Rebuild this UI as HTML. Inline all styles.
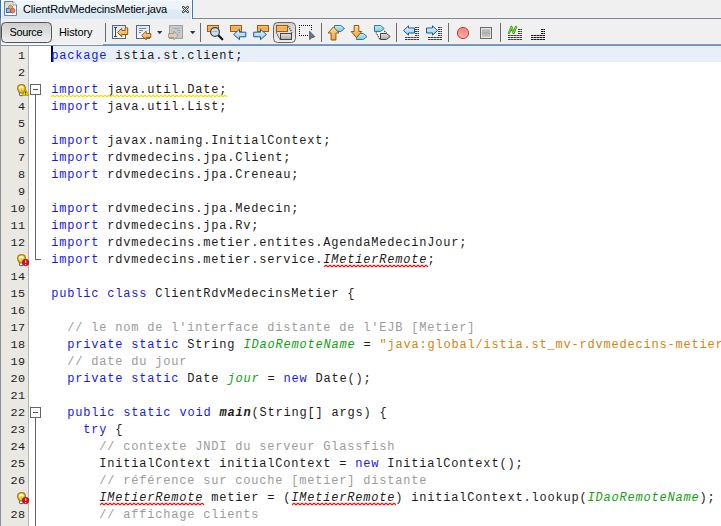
<!DOCTYPE html>
<html>
<head>
<meta charset="utf-8">
<title>ClientRdvMedecinsMetier.java</title>
<style>
html,body{margin:0;padding:0;}
body{width:721px;height:526px;overflow:hidden;position:relative;background:#fff;font-family:"Liberation Sans",sans-serif;}
.abs{position:absolute;}
#tabbar{left:0;top:0;width:721px;height:19px;background:#f0f0f0;}
#tabline{left:192px;top:18px;width:529px;height:1px;background:#7f8894;}
#tabr{left:192px;top:0;width:1px;height:19px;background:#3e7db3;}
#tabw{left:1px;top:0;width:191px;height:19px;background:#fff;}
#tab{left:2px;top:0;width:189px;height:19px;background:linear-gradient(to bottom,#fafcfe 0,#eef5fb 1.5px,#eaf3fa 9px,#deebf6 10px,#dbe9f5 19px);}
#tabtxt{left:23px;top:2px;letter-spacing:-0.14px;font-size:11px;line-height:14px;color:#000;white-space:nowrap;}
#leftedge{left:0;top:0;width:1px;height:526px;background:linear-gradient(to bottom,#2775b6 0,#2775b6 19px,#8b9098 19px);}
#toolbar{left:1px;top:19px;width:720px;height:26px;background:#f0f0f0;}
#srcbtn{left:2px;top:22px;width:50px;height:21px;box-sizing:border-box;border:1px solid #7a7a7a;border-radius:4px;background:linear-gradient(#e4e4e4,#f4f4f4);}
.tbtxt{font-size:11px;line-height:14px;color:#000;white-space:nowrap;}
.sep{width:1px;height:19px;top:23px;background:#9a9a9a;}
#edtop{left:1px;top:45px;width:720px;height:1px;background:#7093ba;}
#edtop2{left:103px;top:44px;width:618px;height:1px;background:#7d9dc2;}
#edtop3{left:1px;top:44px;width:102px;height:1px;background:#fafafa;}
#gutter{left:1px;top:46px;width:28px;height:480px;background:#e9e8e2;}
#hl{left:53px;top:46px;width:668px;height:16px;background:#e9eff8;}
#caret{left:51px;top:46px;width:2px;height:16px;background:#000;}
#nums{left:1px;top:48px;width:24.6px;text-align:right;font-family:"Liberation Mono",monospace;font-size:11.8px;letter-spacing:0.5px;line-height:17px;color:#222;white-space:pre;}
#code{left:51.3px;top:48px;font-family:"Liberation Mono",monospace;font-size:12px;letter-spacing:0.8px;line-height:17px;color:#1c1c1c;}
#code div{height:17px;white-space:pre;}
.k{color:#1818ea;}
.c{color:#9b9b9b;}
.s{color:#d28512;}
.f{color:#12a012;font-style:italic;}
.i{font-style:italic;}
.bi{font-style:italic;font-weight:bold;}
</style>
</head>
<body>
<div id="tabbar" class="abs"></div>
<div id="tabline" class="abs"></div>
<div id="tabw" class="abs"></div>
<div id="tab" class="abs"></div>
<div id="tabr" class="abs"></div>
<div id="tabtxt" class="abs">ClientRdvMedecinsMetier.java</div>
<div id="toolbar" class="abs"></div>
<svg class="abs" id="tb" style="left:0;top:0" width="721" height="46" viewBox="0 0 721 46">
<defs>
<linearGradient id="gO" x1="0" y1="0" x2="0" y2="1"><stop offset="0" stop-color="#fde0a8"/><stop offset="1" stop-color="#f0a238"/></linearGradient>
<linearGradient id="gB" x1="0" y1="0" x2="0" y2="1"><stop offset="0" stop-color="#f2f9fe"/><stop offset="1" stop-color="#8cc4f0"/></linearGradient>
<linearGradient id="gC" x1="0" y1="0" x2="0" y2="1"><stop offset="0" stop-color="#c4ecf7"/><stop offset="1" stop-color="#7cc9e0"/></linearGradient>
<linearGradient id="gG" x1="0" y1="0" x2="0" y2="1"><stop offset="0" stop-color="#e2e2e2"/><stop offset="1" stop-color="#a9a9a9"/></linearGradient>
<linearGradient id="gR" x1="0" y1="0" x2="0" y2="1"><stop offset="0" stop-color="#fdc27a"/><stop offset="0.5" stop-color="#f3a94e"/><stop offset="1" stop-color="#f7c07c"/></linearGradient>
<linearGradient id="gP" x1="0" y1="0" x2="0" y2="1"><stop offset="0" stop-color="#d9e6f4"/><stop offset="1" stop-color="#f2f7fc"/></linearGradient>
<linearGradient id="gBtn" x1="0" y1="0" x2="0" y2="1"><stop offset="0" stop-color="#cecece"/><stop offset="1" stop-color="#f0f0f0"/></linearGradient>
<linearGradient id="gRed" x1="0" y1="0" x2="0" y2="1"><stop offset="0" stop-color="#ff7f7f"/><stop offset="1" stop-color="#ffb0a6"/></linearGradient>
<linearGradient id="gSq" x1="0" y1="0" x2="0" y2="1"><stop offset="0" stop-color="#cfcfcf"/><stop offset="0.5" stop-color="#adadad"/><stop offset="1" stop-color="#d4d4d4"/></linearGradient>
<linearGradient id="gFile" x1="0" y1="0" x2="1" y2="1"><stop offset="0" stop-color="#c3ccd6"/><stop offset="0.7" stop-color="#ffffff"/></linearGradient>
</defs>
<!-- separators -->
<g fill="#6b6b6b"><rect x="105" y="23" width="1" height="19"/><rect x="200" y="23" width="1" height="19"/><rect x="321" y="23" width="1" height="19"/><rect x="396" y="23" width="1" height="19"/><rect x="448" y="23" width="1" height="19"/><rect x="500" y="23" width="1" height="19"/></g>
<!-- source button -->
<rect x="1.5" y="22.5" width="50" height="20" rx="4" fill="url(#gBtn)" stroke="#555"/>
<!-- icon1 last edit -->
<rect x="112.5" y="25.5" width="13" height="13" fill="url(#gP)" stroke="#56677a"/>
<path d="M114,27.5h3M115.5,27.5v9M114,36.5h3" stroke="#3d4a58" fill="none"/>
<path d="M117.5,32.5L121.8,28.2V30.5H125.2V27.8H127.7V34.5H121.8V36.8Z" fill="url(#gO)" stroke="#9b560a" stroke-linejoin="round"/>
<!-- icon2 -->
<rect x="136.5" y="25.5" width="13" height="13" fill="url(#gP)" stroke="#56677a"/>
<path d="M139,28.5h7M139,30.5h4M139,32.5h2" stroke="#7b8896" fill="none"/>
<path d="M141.7,35.5L146.2,31.2V33.6H150.8V37.4H146.2V39.8Z" fill="url(#gO)" stroke="#9b560a" stroke-linejoin="round"/>
<path d="M157,31h5.4l-2.7,3.2z" fill="#2f3b4b"/>
<!-- icon3 disabled -->
<rect x="169.5" y="25.5" width="13" height="13" fill="#c6cacd" stroke="#9ba1a6"/>
<path d="M173,28.5h7M177,30.5h3M178,32.5h2" stroke="#a5abb0" fill="none"/>
<path d="M178.3,35.5L173.8,31.2V33.6H168.6V37.4H173.8V39.8Z" fill="#dccfbc" stroke="#ab997f" stroke-linejoin="round"/>
<path d="M190,31h5.4l-2.7,3.2z" fill="#2f3b4b"/>
<!-- find -->
<rect x="207.5" y="25.5" width="11" height="6" fill="url(#gR)" stroke="#a55a05"/>
<path d="M218.3,35.3L222.3,39.3" stroke="#111" stroke-width="2.2" stroke-linecap="round"/>
<circle cx="215" cy="32" r="4.4" fill="#c9def2" stroke="#3c4046" stroke-width="1.2"/>
<path d="M212.5,31.5h5" stroke="#9db3c9"/>
<!-- find prev -->
<rect x="230.5" y="25.5" width="11" height="6" fill="url(#gR)" stroke="#a55a05"/>
<path d="M233.6,34.5L239.5,29.3V32.2H245.8V36.8H239.5V39.7Z" fill="url(#gB)" stroke="#1b5c9c" stroke-linejoin="round"/>
<!-- find next -->
<rect x="257.5" y="25.5" width="11" height="6" fill="url(#gR)" stroke="#a55a05"/>
<path d="M266.4,34.5L260.5,29.3V32.2H253.7V36.8H260.5V39.7Z" fill="url(#gB)" stroke="#1b5c9c" stroke-linejoin="round"/>
<!-- toggle highlight (pressed) -->
<rect x="273.5" y="22.5" width="22" height="20" rx="4" fill="url(#gBtn)" stroke="#666"/>
<rect x="276.5" y="25.5" width="11" height="6" fill="url(#gR)" stroke="#a55a05"/>
<rect x="280.5" y="33.5" width="11" height="6" fill="url(#gG)" stroke="#444"/>
<path d="M288.6,26.2L292,32.8M276.4,32.6L279.8,39.2" stroke="#222" stroke-width="1.1" stroke-dasharray="1.1 1.1" fill="none"/>
<!-- rect selection -->
<path d="M299,25h1v1h-1zM301,25h1v1h-1zM303,25h1v1h-1zM305,25h1v1h-1zM307,25h1v1h-1zM309,25h1v1h-1zM311,25h1v1h-1zM299,35h1v1h-1zM301,35h1v1h-1zM303,35h1v1h-1zM305,35h1v1h-1zM307,35h1v1h-1zM299,27h1v1h-1zM299,29h1v1h-1zM299,31h1v1h-1zM299,33h1v1h-1zM311,27h1v1h-1zM311,29h1v1h-1z" fill="#111" shape-rendering="crispEdges"/>
<path d="M309.6,31.2V39.6L311.6,37.9L314.9,36.7Z" fill="#6b7986" stroke="#35424f" stroke-width="0.7" stroke-linejoin="round"/>
<!-- prev bookmark -->
<path d="M334.5,25.5H340.8L344.5,28.5L340.8,31.5H334.5Z" fill="url(#gC)" stroke="#2a8095"/>
<path d="M333.5,26.8L339,33H335.9V40H331.1V33H328Z" fill="url(#gO)" stroke="#9b560a" stroke-linejoin="round"/>
<!-- next bookmark -->
<path d="M356.5,33.5H363.3L367,36.5L363.3,39.5H356.5Z" fill="url(#gC)" stroke="#2a8095"/>
<path d="M354.2,25.5H358.8V31.5H361.8L356.5,37.8L351.2,31.5H354.2Z" fill="url(#gO)" stroke="#9b560a" stroke-linejoin="round"/>
<!-- toggle bookmark -->
<path d="M374.5,25.5H380.5L384.2,28.5L380.5,31.5H374.5Z" fill="url(#gC)" stroke="#2a8095"/>
<path d="M380.5,33.5H386.5L390.2,36.5L386.5,39.5H380.5Z" fill="url(#gG)" stroke="#444"/>
<path d="M376,32.4L379.6,39.2M384.4,31L386.6,33.2" stroke="#222" stroke-width="1.1" stroke-dasharray="1.1 1.1" fill="none"/>
<!-- shift left -->
<path d="M403.5,30.5L408.5,25.8V28H414.5V33H408.5V35.2Z" fill="url(#gB)" stroke="#1b5c9c" stroke-linejoin="round"/>
<path d="M415,27.5h4M415,29.5h4M415,31.5h4M415,33.5h4M415,35.5h4M405,37.5h14M405,39.5h14" stroke="#3c3c3c" stroke-dasharray="2.6 0.4" fill="none"/>
<!-- shift right -->
<path d="M437.5,30.5L432.5,25.8V28H426.5V33H432.5V35.2Z" fill="url(#gB)" stroke="#1b5c9c" stroke-linejoin="round"/>
<path d="M438,27.5h4M438,29.5h4M438,31.5h4M438,33.5h4M438,35.5h4M428,37.5h14M428,39.5h14" stroke="#3c3c3c" stroke-dasharray="2.6 0.4" fill="none"/>
<!-- record -->
<circle cx="463" cy="33" r="5.6" fill="url(#gRed)" stroke="#b4423f"/>
<!-- stop -->
<rect x="480.5" y="27.5" width="11" height="11" fill="url(#gSq)" stroke="#6a6a6a"/>
<rect x="481.5" y="28.5" width="9" height="9" fill="none" stroke="#fff" stroke-opacity="0.55"/>
<!-- comment -->
<path d="M509,33L511.5,27L513.5,33L516,27" stroke="#2c9a00" stroke-width="2.2" stroke-linecap="round" stroke-linejoin="round" fill="none"/>
<path d="M509,33L511.5,27L513.5,33L516,27" stroke="#baf07a" stroke-width="0.7" stroke-linecap="round" stroke-linejoin="round" fill="none"/>
<path d="M518,29.5h4M518,31.5h4M518,33.5h4M508,35.5h14M508,37.5h14M508,39.5h14" stroke="#3c3c3c" stroke-dasharray="2.6 0.4" fill="none"/>
<!-- uncomment -->
<path d="M541,29.5h4M541,31.5h4M541,33.5h4M531,35.5h14M531,37.5h14M531,39.5h14" stroke="#151515" stroke-dasharray="2.6 0.4" fill="none"/>
<!-- tab file icon -->
<path d="M4.5,1.5H13L16.5,5V15.5H4.5Z" fill="url(#gFile)" stroke="#74828f"/>
<path d="M13,1.5V5H16.5" fill="#fff" stroke="#74828f" stroke-width="0.8"/>
<rect x="6.5" y="8.5" width="4" height="4" fill="#93c2e8" stroke="#3b70a6"/>
<path d="M10.5,4.6L13,7.1L10.5,9.6L8,7.1Z" fill="#eab040" stroke="#a6720e" stroke-width="0.8"/>
<circle cx="12.6" cy="10.6" r="2.3" fill="#ee7c7c" stroke="#b44848" stroke-width="0.8"/>
<!-- tab close -->
<path d="M183.2,7.2L187.8,11.8M187.8,7.2L183.2,11.8" stroke="#444" stroke-width="2.5" stroke-linecap="round"/>
<path d="M183.2,7.2L187.8,11.8M187.8,7.2L183.2,11.8" stroke="#fff" stroke-width="1" stroke-linecap="round"/>
</svg>
<div class="abs tbtxt" style="left:9.5px;top:25px;letter-spacing:-0.37px;">Source</div>
<div class="abs tbtxt" style="left:59px;top:25px;letter-spacing:-0.1px;">History</div>
<div id="edtop" class="abs"></div><div id="edtop2" class="abs"></div><div id="edtop3" class="abs"></div>
<div id="gutter" class="abs"></div>
<div id="hl" class="abs"></div>
<div id="caret" class="abs"></div>
<div id="nums" class="abs">1
2

4
5
6
7
8
9
10
11
12

14
15
16
17
18
19
20
21
22
23
24
25
26

28</div>
<div id="code" class="abs"><div><span class="k">package</span> istia.st.client;</div>
<div> </div>
<div><span class="k">import</span> java.util.Date;</div>
<div><span class="k">import</span> java.util.List;</div>
<div> </div>
<div><span class="k">import</span> javax.naming.InitialContext;</div>
<div><span class="k">import</span> rdvmedecins.jpa.Client;</div>
<div><span class="k">import</span> rdvmedecins.jpa.Creneau;</div>
<div> </div>
<div><span class="k">import</span> rdvmedecins.jpa.Medecin;</div>
<div><span class="k">import</span> rdvmedecins.jpa.Rv;</div>
<div><span class="k">import</span> rdvmedecins.metier.entites.AgendaMedecinJour;</div>
<div><span class="k">import</span> rdvmedecins.metier.service.<span class="i">IMetierRemote</span>;</div>
<div> </div>
<div><span class="k">public</span> <span class="k">class</span> ClientRdvMedecinsMetier {</div>
<div> </div>
<div>  <span class="c">// le nom de l'interface distante de l'EJB [Metier]</span></div>
<div>  <span class="k">private</span> <span class="k">static</span> String <span class="f">IDaoRemoteName</span> = <span class="s">"java:global/istia.st_mv-rdvmedecins-metier-dao-jpa</span></div>
<div>  <span class="c">// date du jour</span></div>
<div>  <span class="k">private</span> <span class="k">static</span> Date <span class="f">jour</span> = <span class="k">new</span> Date();</div>
<div> </div>
<div>  <span class="k">public</span> <span class="k">static</span> <span class="k">void</span> <span class="bi">main</span>(String[] args) {</div>
<div>    <span class="k">try</span> {</div>
<div>      <span class="c">// contexte JNDI du serveur Glassfish</span></div>
<div>      InitialContext initialContext = <span class="k">new</span> InitialContext();</div>
<div>      <span class="c">// référence sur couche [metier] distante</span></div>
<div>      <span class="i">IMetierRemote</span> metier = (<span class="i">IMetierRemote</span>) initialContext.lookup(<span class="f">IDaoRemoteName</span>);</div>
<div>      <span class="c">// affichage clients</span></div>
</div>
<svg class="abs" id="gut" style="left:0;top:0" width="721" height="526" viewBox="0 0 721 526"><defs><radialGradient id="gBulb" cx="0.45" cy="0.35" r="0.7"><stop offset="0" stop-color="#fff3a0"/><stop offset="0.55" stop-color="#f3cf38"/><stop offset="1" stop-color="#d9a50c"/></radialGradient></defs><rect x="28" y="46" width="1" height="480" fill="#b4b4b0"/><path d="M35.5,95V259.5H41" stroke="#666" fill="none" shape-rendering="crispEdges"/><path d="M35.5,418V526" stroke="#666" fill="none" shape-rendering="crispEdges"/><g transform="translate(0,80)" shape-rendering="crispEdges"><rect x="30.5" y="4.5" width="10" height="10" fill="#fff" stroke="#666"/><rect x="33" y="9" width="5" height="1" fill="#555"/></g><g transform="translate(0,403)" shape-rendering="crispEdges"><rect x="30.5" y="4.5" width="10" height="10" fill="#fff" stroke="#666"/><rect x="33" y="9" width="5" height="1" fill="#555"/></g><g transform="translate(0,80)"><rect x="19.5" y="12.4" width="3.8" height="3.2" rx="0.8" fill="#e4ebf5" stroke="#3f5680" stroke-width="1"/><path d="M21.5,4.7C24,4.7 25.4,6.4 25.4,8.5C25.4,10.3 24,11.2 23.5,12.8H19.5C19,11.2 17.6,10.3 17.6,8.5C17.6,6.4 19,4.7 21.5,4.7Z" fill="url(#gBulb)" stroke="#a8830a" stroke-width="1.3"/><ellipse cx="21.4" cy="7.4" rx="2" ry="1.5" fill="#fffbe0" opacity="0.95"/><path d="M20.3,8.8h2.4M21.5,8.8v3.5" stroke="#d8b640" stroke-width="0.8" fill="none"/><path d="M25.6,9.6L28.9,15.4H22.3Z" fill="#fbe500" stroke="#b89800" stroke-width="0.9" stroke-linejoin="round"/><path d="M25.6,11.4V13.4M25.6,14.1V14.8" stroke="#2a2400" stroke-width="1.1"/></g><g transform="translate(0,250)"><rect x="19.5" y="12.4" width="3.8" height="3.2" rx="0.8" fill="#e4ebf5" stroke="#3f5680" stroke-width="1"/><path d="M21.5,4.7C24,4.7 25.4,6.4 25.4,8.5C25.4,10.3 24,11.2 23.5,12.8H19.5C19,11.2 17.6,10.3 17.6,8.5C17.6,6.4 19,4.7 21.5,4.7Z" fill="url(#gBulb)" stroke="#a8830a" stroke-width="1.3"/><ellipse cx="21.4" cy="7.4" rx="2" ry="1.5" fill="#fffbe0" opacity="0.95"/><path d="M20.3,8.8h2.4M21.5,8.8v3.5" stroke="#d8b640" stroke-width="0.8" fill="none"/><circle cx="25.6" cy="12.5" r="3.3" fill="#d5101c" stroke="#a00510" stroke-width="0.6"/><path d="M25.6,10.4V13M25.6,13.9V14.7" stroke="#fff" stroke-width="1.2"/></g><g transform="translate(0,488)"><rect x="19.5" y="12.4" width="3.8" height="3.2" rx="0.8" fill="#e4ebf5" stroke="#3f5680" stroke-width="1"/><path d="M21.5,4.7C24,4.7 25.4,6.4 25.4,8.5C25.4,10.3 24,11.2 23.5,12.8H19.5C19,11.2 17.6,10.3 17.6,8.5C17.6,6.4 19,4.7 21.5,4.7Z" fill="url(#gBulb)" stroke="#a8830a" stroke-width="1.3"/><ellipse cx="21.4" cy="7.4" rx="2" ry="1.5" fill="#fffbe0" opacity="0.95"/><path d="M20.3,8.8h2.4M21.5,8.8v3.5" stroke="#d8b640" stroke-width="0.8" fill="none"/><circle cx="25.6" cy="12.5" r="3.3" fill="#d5101c" stroke="#a00510" stroke-width="0.6"/><path d="M25.6,10.4V13M25.6,13.9V14.7" stroke="#fff" stroke-width="1.2"/></g><path d="M51,96.8L53,95.2L55,96.8L57,95.2L59,96.8L61,95.2L63,96.8L65,95.2L67,96.8L69,95.2L71,96.8L73,95.2L75,96.8L77,95.2L79,96.8L81,95.2L83,96.8L85,95.2L87,96.8L89,95.2L91,96.8L93,95.2L95,96.8L97,95.2L99,96.8L101,95.2L103,96.8L105,95.2L107,96.8L109,95.2L111,96.8L113,95.2L115,96.8L117,95.2L119,96.8L121,95.2L123,96.8L125,95.2L127,96.8L129,95.2L131,96.8L133,95.2L135,96.8L137,95.2L139,96.8L141,95.2L143,96.8L145,95.2L147,96.8L149,95.2L151,96.8L153,95.2L155,96.8L157,95.2L159,96.8L161,95.2L163,96.8L165,95.2L167,96.8L169,95.2L171,96.8L173,95.2L175,96.8L177,95.2L179,96.8L181,95.2L183,96.8L185,95.2L187,96.8L189,95.2L191,96.8L193,95.2L195,96.8L197,95.2L199,96.8L201,95.2L203,96.8L205,95.2L207,96.8L209,95.2L211,96.8L213,95.2L215,96.8L217,95.2L219,96.8L221,95.2L223,96.8L225,95.2L227,96.8" stroke="#f2e000" stroke-width="1.15" fill="none"/><path d="M324,266.8L326,265.2L328,266.8L330,265.2L332,266.8L334,265.2L336,266.8L338,265.2L340,266.8L342,265.2L344,266.8L346,265.2L348,266.8L350,265.2L352,266.8L354,265.2L356,266.8L358,265.2L360,266.8L362,265.2L364,266.8L366,265.2L368,266.8L370,265.2L372,266.8L374,265.2L376,266.8L378,265.2L380,266.8L382,265.2L384,266.8L386,265.2L388,266.8L390,265.2L392,266.8L394,265.2L396,266.8L398,265.2L400,266.8L402,265.2L404,266.8L406,265.2L408,266.8L410,265.2L412,266.8L414,265.2L416,266.8L418,265.2L420,266.8L422,265.2L424,266.8L426,265.2L428,266.8" stroke="#ff0a0a" stroke-width="1.15" fill="none"/><path d="M100,504.8L102,503.2L104,504.8L106,503.2L108,504.8L110,503.2L112,504.8L114,503.2L116,504.8L118,503.2L120,504.8L122,503.2L124,504.8L126,503.2L128,504.8L130,503.2L132,504.8L134,503.2L136,504.8L138,503.2L140,504.8L142,503.2L144,504.8L146,503.2L148,504.8L150,503.2L152,504.8L154,503.2L156,504.8L158,503.2L160,504.8L162,503.2L164,504.8L166,503.2L168,504.8L170,503.2L172,504.8L174,503.2L176,504.8L178,503.2L180,504.8L182,503.2L184,504.8L186,503.2L188,504.8L190,503.2L192,504.8L194,503.2L196,504.8L198,503.2L200,504.8L202,503.2L204,504.8" stroke="#ff0a0a" stroke-width="1.15" fill="none"/><path d="M292,504.8L294,503.2L296,504.8L298,503.2L300,504.8L302,503.2L304,504.8L306,503.2L308,504.8L310,503.2L312,504.8L314,503.2L316,504.8L318,503.2L320,504.8L322,503.2L324,504.8L326,503.2L328,504.8L330,503.2L332,504.8L334,503.2L336,504.8L338,503.2L340,504.8L342,503.2L344,504.8L346,503.2L348,504.8L350,503.2L352,504.8L354,503.2L356,504.8L358,503.2L360,504.8L362,503.2L364,504.8L366,503.2L368,504.8L370,503.2L372,504.8L374,503.2L376,504.8L378,503.2L380,504.8L382,503.2L384,504.8L386,503.2L388,504.8L390,503.2L392,504.8L394,503.2L396,504.8" stroke="#ff0a0a" stroke-width="1.15" fill="none"/></svg>
<div id="leftedge" class="abs"></div>
</body>
</html>
